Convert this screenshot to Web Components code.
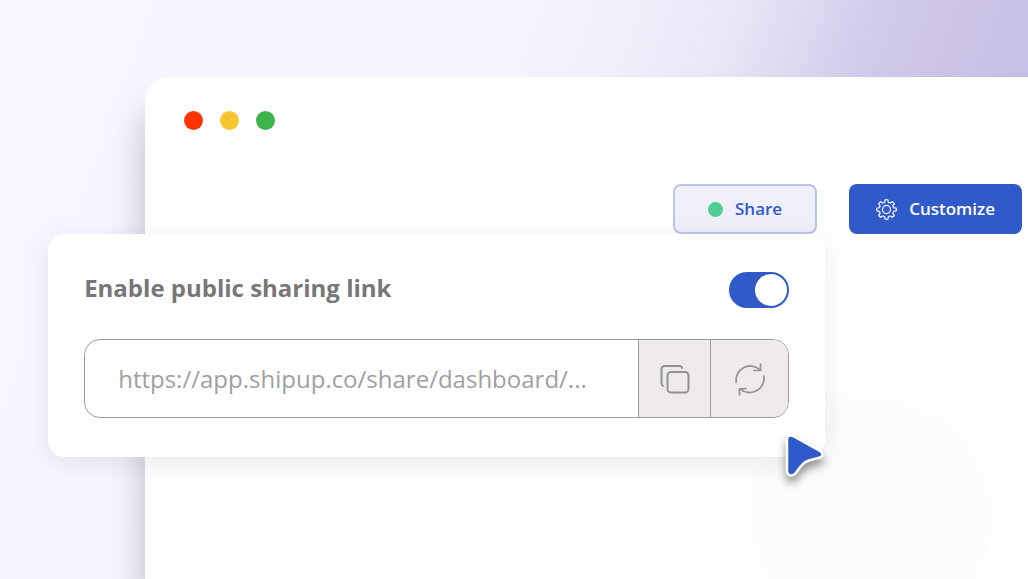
<!DOCTYPE html>
<html lang="en">
<head>
<meta charset="utf-8">
<meta name="viewport" content="width=device-width, initial-scale=1">
<title>Share dashboard</title>
<style>
  html, body {
    margin: 0;
    height: 100%;
    overflow: hidden;
  }
  body {
    font-family: "Open Sans", "Noto Sans", sans-serif;
    color: #777;
    background: #f8f6ff;
  }
</style>
</head>
<body>
<share-page>
  <browser-window>
    <share-menu slot="actions">
      <share-panel heading="Enable public sharing link" url="https://app.shipup.co/share/dashboard/..."></share-panel>
    </share-menu>
    <customize-button slot="actions">Customize</customize-button>
  </browser-window>
</share-page>

<script>
function makeTemplate(html) {
  const template = document.createElement('template');
  template.innerHTML = html;
  return template;
}

// Page background
const pageTemplate = makeTemplate(`
<style>
:host {
  display: flex;
  box-sizing: border-box;
  height: 100vh;
  padding: 77px 0 0 145px;
  overflow: hidden;
  background: linear-gradient(110deg, #f8f6ff 0%, #f7f5ff 41%, #f2effd 51%, #e9e6f6 60%, #e0dbf1 65%, #d5cdec 70%, #cbc2e6 79%, #c8bfe8 86%);
}
</style>
<slot></slot>`);

class SharePage extends HTMLElement {
  constructor() {
    super();
    this.attachShadow({mode: 'open'});
    this.shadowRoot.appendChild(pageTemplate.content.cloneNode(true));
  }
}

// Window with the three dots and an action row
const windowTemplate = makeTemplate(`
<style>
:host {
  display: block;
  position: relative;
  flex: 1;
  padding: 34px 6px 0 39px;
  border-radius: 24px 0 0 0;
  background: #fff;
  box-shadow: 0 32px 36px rgba(40, 30, 60, 0.28);
}
.glow {
  position: absolute;
  right: 28px;
  bottom: -66px;
  width: 258px;
  height: 258px;
  border-radius: 50%;
  background: radial-gradient(closest-side, #fcfcfc 90%, #fff);
}
.dots {
  display: flex;
  gap: 17px;
}
.dots span {
  width: 19px;
  height: 19px;
  border-radius: 50%;
}
.red { background: #ff3400; }
.yellow { background: #f7c52f; }
.green { background: #3bb44a; }
.actions {
  display: flex;
  justify-content: flex-end;
  gap: 32px;
  margin-top: 54px;
}
</style>
<div class="glow"></div>
<div class="dots">
  <span class="red"></span>
  <span class="yellow"></span>
  <span class="green"></span>
</div>
<div class="actions"><slot name="actions"></slot></div>`);

class BrowserWindow extends HTMLElement {
  constructor() {
    super();
    this.attachShadow({mode: 'open'});
    this.shadowRoot.appendChild(windowTemplate.content.cloneNode(true));
  }
}

// Both action buttons share this
const buttonStyle = `
button {
  display: flex;
  align-items: center;
  box-sizing: border-box;
  height: 50px;
  margin: 0;
  border-radius: 8px;
  font: 600 17px/24px "Open Sans", "Noto Sans", sans-serif;
  cursor: pointer;
}`;

const menuTemplate = makeTemplate(`
<style>
${buttonStyle}
:host {
  display: block;
  position: relative;
}
button {
  gap: 12px;
  padding: 0 33px;
  border: 2px solid #bcc4ee;
  background: #f0f0fb;
  color: #3059ca;
}
.status {
  width: 15px;
  height: 15px;
  border-radius: 50%;
  background: #4fd093;
}
.menu {
  position: absolute;
  top: 100%;
  right: -8px;
  width: calc(100vw - 251px);
}
</style>
<button type="button" aria-expanded="true"><span class="status"></span>Share</button>
<div class="menu"><slot></slot></div>`);

class ShareMenu extends HTMLElement {
  constructor() {
    super();
    this.attachShadow({mode: 'open'});
    this.shadowRoot.appendChild(menuTemplate.content.cloneNode(true));
  }

  connectedCallback() {
    const button = this.shadowRoot.querySelector('button');
    const menu = this.shadowRoot.querySelector('.menu');
    button.addEventListener('click', () => {
      menu.hidden = !menu.hidden;
      button.setAttribute('aria-expanded', String(!menu.hidden));
    });
  }
}

const customizeTemplate = makeTemplate(`
<style>
${buttonStyle}
:host {
  display: block;
}
button {
  gap: 12px;
  padding: 0 27px;
  border: 0;
  background: #3059ca;
  color: #fff;
}
</style>
<button type="button">
  <svg width="21" height="21" viewBox="0 0 24 24" fill="none" stroke="currentColor" stroke-width="1.4" stroke-linejoin="round" aria-hidden="true">
    <circle cx="12" cy="12" r="4.6"/>
    <path id="gear"/>
  </svg>
  <slot></slot>
</button>`);

class CustomizeButton extends HTMLElement {
  constructor() {
    super();
    this.attachShadow({mode: 'open'});
    this.shadowRoot.appendChild(customizeTemplate.content.cloneNode(true));
    this.shadowRoot.querySelector('#gear').setAttribute('d', this.gearPath());
  }

  // eight rounded teeth around the centre
  gearPath() {
    const at = (r, deg) => {
      const a = deg * Math.PI / 180;
      return (12 + r * Math.cos(a)).toFixed(2) + ' ' + (12 + r * Math.sin(a)).toFixed(2);
    };
    let d = '';
    for (let i = 0; i < 8; i++) {
      const c = i * 45;
      d += (i ? 'L' : 'M') + at(8.8, c - 13) + 'L' + at(11, c - 9);
      d += 'Q' + at(11.6, c) + ' ' + at(11, c + 9) + 'L' + at(8.8, c + 13);
      d += 'Q' + at(7.8, c + 22.5) + ' ' + at(8.8, c + 32);
    }
    return d + 'Z';
  }
}

// Panel with the toggle and the link field
const panelTemplate = makeTemplate(`
<style>
:host {
  display: block;
  position: relative;
  box-sizing: border-box;
  padding: 36px 36px 39px;
  border-radius: 16px;
  background: #fff;
  box-shadow: 0 6px 28px rgba(30, 20, 50, 0.09);
}
.top {
  display: flex;
  align-items: flex-start;
  justify-content: space-between;
  padding-top: 2px;
}
label {
  font-size: 24px;
  line-height: 32px;
  font-weight: 700;
  color: #777;
}
input[type=checkbox] {
  appearance: none;
  display: flex;
  align-items: center;
  box-sizing: border-box;
  width: 60px;
  height: 36px;
  margin: 0;
  padding: 2px;
  border-radius: 18px;
  background: #bbb;
  cursor: pointer;
}
input[type=checkbox]::before {
  content: "";
  width: 32px;
  height: 32px;
  border-radius: 50%;
  background: #fff;
}
input[type=checkbox]:checked {
  justify-content: flex-end;
  background: #3059ca;
}
.field {
  display: flex;
  box-sizing: border-box;
  height: 79px;
  margin-top: 31px;
  border: 1px solid #9b9b9b;
  border-radius: 16px;
  overflow: hidden;
}
input[type=text] {
  flex: 1;
  min-width: 0;
  margin: 0;
  padding: 0 33px;
  border: 0;
  outline: 0;
  background: transparent;
  font: 400 24px/36px "Open Sans", "Noto Sans", sans-serif;
  color: #a0a0a0;
}
.field button {
  display: flex;
  align-items: center;
  justify-content: center;
  box-sizing: border-box;
  width: 72px;
  margin: 0;
  padding: 0;
  border: 0;
  border-left: 1px solid #9b9b9b;
  background: #efebea;
  color: #929292;
  cursor: pointer;
}
.field button:last-child {
  width: 78px;
}
.pointer {
  position: absolute;
  right: 0;
  bottom: -22px;
  overflow: visible;
  filter: drop-shadow(0 6px 4px rgba(0, 0, 0, 0.4));
}
</style>
<div class="top">
  <label for="toggle"></label>
  <input type="checkbox" id="toggle" checked>
</div>
<div class="field">
  <input type="text" id="link" aria-label="Sharing link" readonly>
  <button type="button" id="copy" aria-label="Copy link">
    <svg width="30" height="30" viewBox="0 0 30 30" fill="none" stroke="currentColor" stroke-width="2" stroke-linecap="round" stroke-linejoin="round">
      <rect x="7.5" y="8" width="21" height="20.5" rx="3.5"/>
      <path d="M3 22Q1.500 21 1.500 19V5.500Q1.500 2 5 2H19Q21.500 2 22 4"/>
    </svg>
  </button>
  <button type="button" aria-label="Renew link">
    <svg width="32" height="34" viewBox="0 0 32 34" fill="none" stroke="currentColor" stroke-width="1.700" stroke-linecap="round" stroke-linejoin="round">
      <path d="M2.200 20.500A14.200 14.200 0 0 1 25.800 7.700"/>
      <path d="M26.500 2V8.500H20"/>
      <path d="M29.800 14A14.200 14.200 0 0 1 6.200 26.800"/>
      <path d="M5.500 33V27L12 26.500"/>
    </svg>
  </button>
</div>
<svg class="pointer" width="42" height="46" viewBox="0 0 42 46" aria-hidden="true">
  <path d="M4 7Q4 1 10 3L37 18Q42 21.500 37 24.500L26 27.500Q22 28.500 18 33L12 41Q6 45 4 39Z" fill="#3059ca" stroke="#fff" stroke-width="2.500" stroke-linejoin="round"/>
</svg>`);

class SharePanel extends HTMLElement {
  constructor() {
    super();
    this.attachShadow({mode: 'open'});
    this.shadowRoot.appendChild(panelTemplate.content.cloneNode(true));
  }

  connectedCallback() {
    const link = this.shadowRoot.querySelector('#link');
    this.shadowRoot.querySelector('label').textContent = this.getAttribute('heading');
    link.value = this.getAttribute('url');

    this.shadowRoot.querySelector('#copy').addEventListener('click', () => {
      link.select();
      document.execCommand('copy');
    });
  }
}

window.customElements.define('share-page', SharePage);
window.customElements.define('browser-window', BrowserWindow);
window.customElements.define('share-menu', ShareMenu);
window.customElements.define('customize-button', CustomizeButton);
window.customElements.define('share-panel', SharePanel);
</script>
</body>
</html>
